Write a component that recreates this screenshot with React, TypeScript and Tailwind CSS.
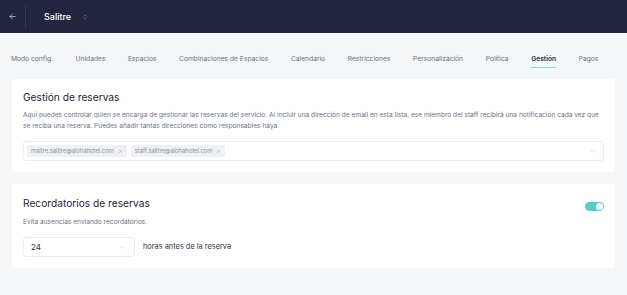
import { ArrowLeft, ChevronDown, ChevronsUpDown, X } from "lucide-react";

const tabs = [
  "Modo config.",
  "Unidades",
  "Espacios",
  "Combinaciones de Espacios",
  "Calendario",
  "Restricciones",
  "Personalización",
  "Política",
  "Gestión",
  "Pagos",
];

const emails = ["maitre.salitre@alohahotel.com", "staff.salitre@alohahotel.com"];

export default function App() {
  return (
    <div className="min-h-screen w-[627px] bg-[#f5f6f8] font-['Inter',sans-serif]">
      {/* top bar */}
      <header className="flex h-[33px] items-center bg-[#23243e] text-white">
        <div className="flex w-[25px] items-center justify-center">
          <ArrowLeft className="ml-[-1px] h-[9px] w-[9px] text-[#c9cad6]" strokeWidth={2} />
        </div>
        <div className="h-[24px] w-px bg-[#353750]" />
        <span className="ml-[18px] text-[9px] font-medium">Salitre</span>
        <ChevronsUpDown className="ml-[11px] h-[6px] w-[6px] text-[#8f91a6]" strokeWidth={2} />
      </header>

      {/* tabs */}
      <nav className="flex h-[46px] items-center gap-[22.6px] whitespace-nowrap px-[11px] pt-[6px] text-[6.7px] text-[#6b7280]">
        {tabs.map((t) => (
          <div key={t} className="relative flex flex-col items-center">
            <span className={t === "Gestión" ? "font-semibold text-[#2d3142]" : ""}>{t}</span>
            {t === "Gestión" && (
              <span className="absolute top-[13px] h-[1.5px] w-full rounded-full bg-[#80ddd6]" />
            )}
          </div>
        ))}
      </nav>

      <main className="flex flex-col gap-[12px] px-[12px]">
        {/* card 1 */}
        <section className="rounded-[3px] bg-white px-[11px] pb-[11px] pt-[10px]">
          <h2 className="text-[10.2px] leading-[16px] text-[#1f2433]">Gestión de reservas</h2>
          <p className="mt-[4.5px] text-[6.6px] leading-[11px] text-[#6b7280]">
            Aquí puedes controlar quién se encarga de gestionar las reservas del servicio. Al incluir una
            dirección de email en esta lista, ese miembro del staff recibirá una notificación cada vez que
            se reciba una reserva. Puedes añadir tantas direcciones como responsables haya.
          </p>
          <div className="mt-[9.5px] flex h-[20px] items-center rounded-[3px] border border-[#eceef1] pl-[3px] pr-[7px]">
            <div className="flex flex-1 gap-[4px]">
              {emails.map((e) => (
                <span
                  key={e}
                  className="flex h-[12px] items-center gap-[4px] rounded-[2px] bg-[#eef0f3] px-[4px] text-[5.8px] text-[#8b909b]"
                >
                  {e}
                  <X className="h-[5px] w-[5px]" strokeWidth={2} />
                </span>
              ))}
            </div>
            <ChevronDown className="h-[7px] w-[7px] text-[#b5b9c1]" strokeWidth={1.5} />
          </div>
        </section>

        {/* card 2 */}
        <section className="rounded-[3px] bg-white px-[11px] pb-[11px] pt-[11px]">
          <div className="flex items-center justify-between">
            <h2 className="text-[10.2px] leading-[16px] text-[#1f2433]">Recordatorios de reservas</h2>
            <div className="mt-[6px] flex h-[9px] w-[19px] items-center justify-end rounded-full bg-[#52cfc6] pr-[1px]">
              <span className="h-[7px] w-[7px] rounded-full bg-white" />
            </div>
          </div>
          <p className="mt-[5.5px] text-[6.6px] leading-[11px] text-[#6b7280]">
            Evita ausencias enviando recordatorios.
          </p>
          <div className="mt-[9.5px] flex items-center gap-[8px]">
            <div className="flex h-[20px] w-[112px] items-center justify-between rounded-[3px] border border-[#eceef1] pl-[7px] pr-[8px]">
              <span className="text-[8px] text-[#2d3142]">24</span>
              <ChevronDown className="h-[7px] w-[7px] text-[#b5b9c1]" strokeWidth={1.5} />
            </div>
            <span className="text-[7.4px] text-[#2d3142]">horas antes de la reserva</span>
          </div>
        </section>
      </main>
    </div>
  );
}
